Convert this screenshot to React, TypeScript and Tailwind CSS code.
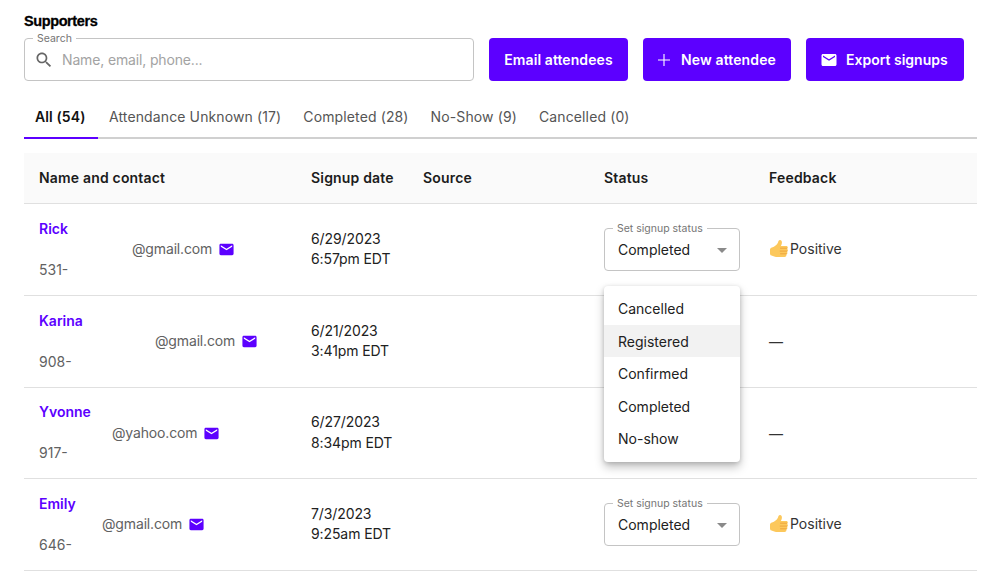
const MAIL_PATH =
  "M20 4H4c-1.1 0-1.99.9-1.99 2L2 18c0 1.1.9 2 2 2h16c1.1 0 2-.9 2-2V6c0-1.1-.9-2-2-2zm0 4l-8 5-8-5V6l8 5 8-5v2z";

const TABS = [
  { label: "All (54)", active: true },
  { label: "Attendance Unknown (17)" },
  { label: "Completed (28)" },
  { label: "No-Show (9)" },
  { label: "Cancelled (0)" },
];

const ROWS = [
  { name: "Rick", email: "@gmail.com", gap: "pl-[93px]", phone: "531-", date: "6/29/2023", time: "6:57pm EDT", feedback: "Positive", h: "h-[92px]", select: true },
  { name: "Karina", email: "@gmail.com", gap: "pl-[116px]", phone: "908-", date: "6/21/2023", time: "3:41pm EDT", feedback: "", h: "h-[92px]", select: false },
  { name: "Yvonne", email: "@yahoo.com", gap: "pl-[73px]", phone: "917-", date: "6/27/2023", time: "8:34pm EDT", feedback: "", h: "h-[91px]", select: false },
  { name: "Emily", email: "@gmail.com", gap: "pl-[63px]", phone: "646-", date: "7/3/2023", time: "9:25am EDT", feedback: "Positive", h: "h-[92px]", select: true },
];

const MENU = ["Cancelled", "Registered", "Confirmed", "Completed", "No-show"];

function MailIcon({ className }: { className: string }) {
  return (
    <svg viewBox="0 0 24 24" fill="currentColor" className={className}>
      <path d={MAIL_PATH} />
    </svg>
  );
}

function ThumbIcon() {
  return (
    <svg viewBox="0 0 20 20" className="h-[20px] w-[20px] shrink-0">
      <path
        d="M1 10.500c0-1 .9-1.800 2-2.100 2.600-.8 5-2.600 6-5 .4-1 .7-2.400 2-2.400 1.500 0 2.100 1.500 1.900 3-.1 1-.5 2-1 2.900h5.300c1 0 1.600.7 1.600 1.600 0 .6-.3 1.100-.7 1.400.5.300.8.800.8 1.400 0 .7-.4 1.200-1 1.500.3.300.5.700.5 1.200 0 .7-.5 1.300-1.200 1.500.1.200.2.500.2.700 0 1-.8 1.700-1.800 1.700H7c-1.300 0-2.200-.6-3.200-.9-.8-.2-1.800-.2-2.300-.9-.3-.4-.5-1-.5-1.600z"
        fill="#fcc85c"
      />
      <path
        d="M11.500 9.200h6.200M11.200 12.100h6.700M11.500 14.800h5.800"
        stroke="#eca13a"
        strokeWidth="0.900"
        strokeLinecap="round"
        fill="none"
      />
    </svg>
  );
}

function StatusSelect() {
  return (
    <div className="relative flex h-[43px] w-[136px] items-center rounded border border-[#c4c4c4] pl-[13px] text-[14px] text-[#212121]">
      <span className="absolute -top-[7px] left-[8px] bg-white px-[4px] text-[10.500px] leading-[13px] text-[#757575]">
        Set signup status
      </span>
      Completed
      <span className="absolute right-[12px] top-[19px] h-0 w-0 border-x-[5px] border-t-[5px] border-x-transparent border-t-[#8a8a8a]" />
    </div>
  );
}

export default function App() {
  return (
    <div className="relative h-[576px] w-[986px] overflow-hidden bg-white px-[24px] pt-[13px] font-['Inter',sans-serif] text-[14px]">
      <h1 className="h-[18px] font-['Liberation_Sans',sans-serif] text-[14.500px] font-bold leading-[17px] tracking-[-0.4px] text-black [-webkit-text-stroke:0.3px_black]">
        Supporters
      </h1>

      {/* Search and actions */}
      <div className="mt-[7px] flex h-[43px]">
        <div className="relative flex w-[450px] shrink-0 items-center rounded border border-[#c4c4c4] pl-[9px]">
          <span className="absolute -top-[7px] left-[8px] bg-white px-[4px] text-[10.500px] leading-[13px] text-[#757575]">
            Search
          </span>
          <svg viewBox="0 0 24 24" fill="currentColor" className="h-[20px] w-[20px] text-[#666666]">
            <path d="M15.500 14h-.79l-.28-.27C15.410 12.590 16 11.110 16 9.500 16 5.910 13.090 3 9.500 3S3 5.910 3 9.500 5.910 16 9.500 16c1.610 0 3.090-.59 4.230-1.570l.27.28v.79l5 4.990L20.490 19l-4.990-5zm-6 0C7.010 14 5 11.990 5 9.500S7.010 5 9.500 5 14 7.010 14 9.500 11.990 14 9.500 14z" />
          </svg>
          <span className="ml-[8px] text-[14px] tracking-[-0.15px] text-[#a3a3a3]">Name, email, phone...</span>
        </div>
        <button className="ml-[15px] flex w-[139px] shrink-0 items-center justify-center rounded bg-[#5c00ff] text-[14px] font-semibold tracking-[0.08px] text-white">
          Email attendees
        </button>
        <button className="ml-[15px] flex w-[148px] shrink-0 items-center justify-center gap-[11px] rounded bg-[#5c00ff] text-[14px] font-semibold tracking-[0.12px] text-white">
          <svg viewBox="0 0 14 14" className="h-[12px] w-[12px]" stroke="currentColor" strokeWidth="1.300" fill="none">
            <path d="M7 0v14M0 7h14" />
          </svg>
          New attendee
        </button>
        <button className="ml-[15px] flex w-[158px] shrink-0 items-center gap-[8.500px] rounded bg-[#5c00ff] pl-[13.500px] text-[14px] font-semibold text-white">
          <MailIcon className="h-[18px] w-[18px]" />
          Export signups
        </button>
      </div>

      {/* Tabs */}
      <div className="mt-[15px] flex h-[43px] w-[953px] border-b-2 border-[#d0d0d0] tracking-[0.12px]">
        {TABS.map((tab) => (
          <div
            key={tab.label}
            className={
              tab.active
                ? "-mb-[2px] flex h-[43px] w-[74px] items-center border-b-2 border-[#5c00ff] pl-[11px] font-semibold text-[#111111]"
                : "flex h-[41px] items-center px-[11px] text-[#555555]"
            }
          >
            {tab.label}
          </div>
        ))}
      </div>

      {/* Table */}
      <div className="mt-[14px] w-[953px]">
        <div className="grid h-[51px] grid-cols-[272px_112px_181px_165px_1fr] items-center border-b border-[#e0e0e0] bg-[#fafafa] pb-[2px] pl-[15px] font-semibold tracking-[0.18px] text-[#1c1c1c]">
          <div>Name and contact</div>
          <div>Signup date</div>
          <div>Source</div>
          <div>Status</div>
          <div>Feedback</div>
        </div>
        {ROWS.map((row) => (
          <div
            key={row.name}
            className={`grid ${row.h} grid-cols-[272px_112px_181px_165px_1fr] items-center border-b border-[#e0e0e0] pl-[15px]`}
          >
            <div className="leading-[20.500px]">
              <div className="font-semibold text-[#5c00ff]">{row.name}</div>
              <div className={`flex items-center gap-[6px] ${row.gap} tracking-[-0.15px] text-[#616161]`}>
                {row.email}
                <MailIcon className="h-[17px] w-[17px] text-[#5c00ff]" />
              </div>
              <div className="text-[#616161]">{row.phone}</div>
            </div>
            <div className="pb-[1px] leading-[20.500px] tracking-[-0.1px] text-[#212121]">
              <div>{row.date}</div>
              <div>{row.time}</div>
            </div>
            <div />
            {row.select ? <StatusSelect /> : <div />}
            {row.feedback ? (
              <div className="flex items-center gap-[1px] pb-[2px] text-[#333333]">
                <ThumbIcon />
                {row.feedback}
              </div>
            ) : (
              <div className="text-[#333333]">—</div>
            )}
          </div>
        ))}
      </div>

      {/* Open status menu */}
      <div className="absolute left-[604px] top-[286px] w-[136px] rounded bg-white pb-[7px] pt-[6.300px] shadow-[0_5px_10px_rgba(0,0,0,0.25),0_1px_4px_rgba(0,0,0,0.15)]">
        {MENU.map((item) => (
          <div
            key={item}
            className={`flex h-[32.500px] items-center pl-[14px] text-[14px] text-[#212121] ${
              item === "Registered" ? "bg-[#f2f2f2]" : ""
            }`}
          >
            {item}
          </div>
        ))}
      </div>
    </div>
  );
}
